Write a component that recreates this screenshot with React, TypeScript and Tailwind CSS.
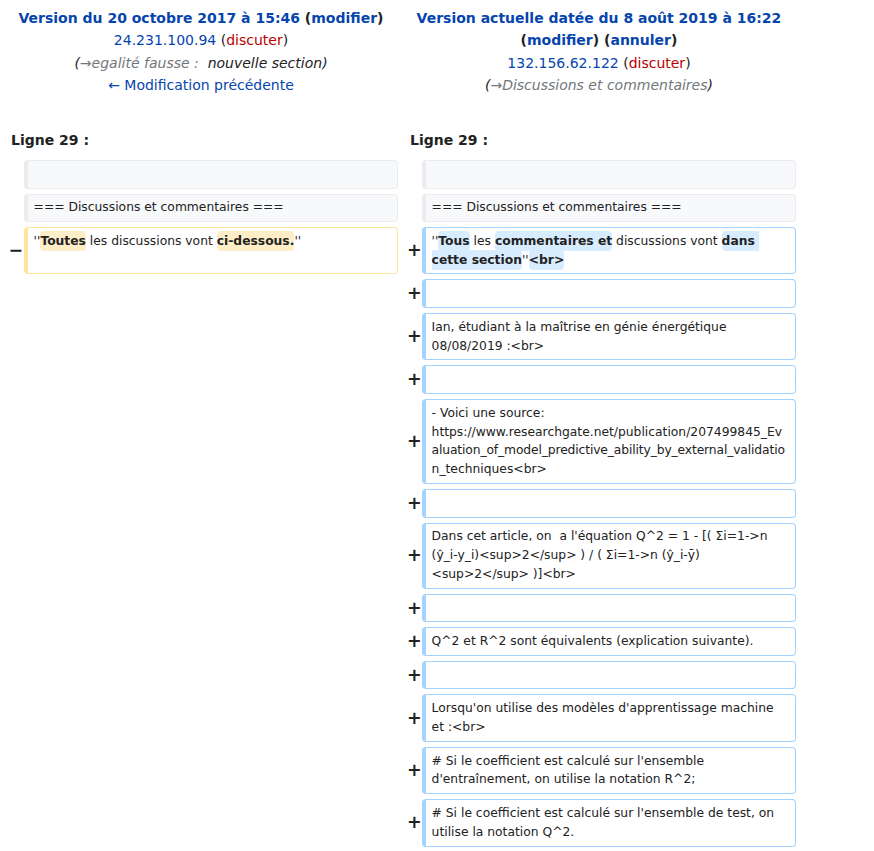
import React from "react";

const COLS = "grid grid-cols-[15.6px_374.4px_15.6px_374.4px] gap-x-[4px]";
const BOX =
  "rounded-[4px] border border-l-4 pl-[6px] pr-[3px] py-[3.8px] text-[12.32px] leading-[18.9px] whitespace-pre-wrap break-words";
const CTX = `${BOX} bg-[#f8f9fa] border-[#eaecf0]`;
const ADD = `${BOX} bg-white border-[#a3d3ff]`;
const DEL = `${BOX} bg-white border-[#ffe49c]`;

function Ins({ children }: { children: React.ReactNode }) {
  return <span className="font-bold bg-[#d8ecff] rounded-[4px] py-[0.25em]">{children}</span>;
}
function Del({ children }: { children: React.ReactNode }) {
  return <span className="font-bold bg-[#feeec8] rounded-[4px] py-[0.25em]">{children}</span>;
}

function Marker({ sign }: { sign?: string }) {
  return (
    <div className="flex items-center justify-end font-bold text-[17.5px] leading-[1.2] text-[#222]">
      {sign === "+" ? (
        <span className="translate-x-[4px] whitespace-nowrap">+</span>
      ) : sign ? (
        <span className="translate-x-[3.5px] whitespace-nowrap">{sign}</span>
      ) : null}
    </div>
  );
}

function AddedOnly({ children }: { children?: React.ReactNode }) {
  return (
    <>
      <div className="col-span-2" />
      <Marker sign="+" />
      <div className={ADD}>{children ?? "\u200b"}</div>
    </>
  );
}

const link = "text-[#0645ad]";
const red = "text-[#ba0000]";

export default function App() {
  return (
    <div className="w-[874px] min-h-[851px] bg-white text-[#222] text-[14px] font-['DejaVu_Sans','Liberation_Sans',sans-serif]">
      <div className="w-[800px] px-[4px] pt-[7px] pb-[10px]">
        {/* header */}
        <div className={COLS}>
          <div className="col-span-2 text-center leading-[22.4px]">
            <div>
              <strong>
                <span className={link}>Version du 20 octobre 2017 à 15:46</span> (
                <span className={link}>modifier</span>)
              </strong>
            </div>
            <div>
              <span className={link}>24.231.100.94</span> (<span className={red}>discuter</span>)
            </div>
            <div className="italic">
              <span>(</span>
              <span className="text-[#72777d]">→egalité fausse :</span>
              {"\u00a0 nouvelle section)"}
            </div>
            <div>
              <span className={link}>← Modification précédente</span>
            </div>
          </div>
          <div className="col-span-2 text-center leading-[22.4px]">
            <div>
              <strong>
                <span className={link}>Version actuelle datée du 8 août 2019 à 16:22</span> (
                <span className={link}>modifier</span>) (<span className={link}>annuler</span>)
              </strong>
            </div>
            <div>
              <span className={link}>132.156.62.122</span> (<span className={red}>discuter</span>)
            </div>
            <div className="italic">
              <span>(</span>
              <span className="text-[#72777d]">→Discussions et commentaires</span>
              <span>)</span>
            </div>
          </div>
        </div>

        {/* line numbers */}
        <div className={`${COLS} mt-[32px]`}>
          <div className="col-span-2 pl-[7px] font-bold leading-[22.4px]">Ligne 29 :</div>
          <div className="col-span-2 pl-[8px] font-bold leading-[22.4px]">Ligne 29 :</div>
        </div>

        {/* diff rows */}
        <div className={`${COLS} gap-y-[5px] mt-[9px]`}>
          <Marker />
          <div className={CTX}>{"\u200b"}</div>
          <Marker />
          <div className={CTX}>{"\u200b"}</div>

          <Marker />
          <div className={CTX}>=== Discussions et commentaires ===</div>
          <Marker />
          <div className={CTX}>=== Discussions et commentaires ===</div>

          <Marker sign="−" />
          <div className={DEL}>
            ''<Del>Toutes</Del> les discussions vont <Del>ci-dessous.</Del>''
          </div>
          <Marker sign="+" />
          <div className={ADD}>
            ''<Ins>Tous</Ins> les <Ins>commentaires et</Ins> discussions vont{" "}
            <Ins>dans cette section</Ins>''<Ins>&lt;br&gt;</Ins>
          </div>

          <AddedOnly />
          <AddedOnly>Ian, étudiant à la maîtrise en génie énergétique 08/08/2019 :&lt;br&gt;</AddedOnly>
          <AddedOnly />
          <AddedOnly>
            {"- Voici une source: https://www.researchgate.net/publication/207499845_Ev\n"}
            <span className="tracking-[-0.13px]">{"aluation_of_model_predictive_ability_by_external_validatio"}</span>
            {"\nn_techniques<br>"}
          </AddedOnly>
          <AddedOnly />
          <AddedOnly>
            {
              "Dans cet article, on  a l'équation Q^2 = 1 - [( Σi=1->n (ŷ_i-y_i)<sup>2</sup> ) / ( Σi=1->n (ŷ_i-ȳ) <sup>2</sup> )]<br>"
            }
          </AddedOnly>
          <AddedOnly />
          <AddedOnly>Q^2 et R^2 sont équivalents (explication suivante).</AddedOnly>
          <AddedOnly />
          <AddedOnly>{"Lorsqu'on utilise des modèles d'apprentissage machine\net :<br>"}</AddedOnly>
          <AddedOnly>
            {"# Si le coefficient est calculé sur l'ensemble d'entraînement, on utilise la notation R^2;"}
          </AddedOnly>
          <AddedOnly>
            {"# Si le coefficient est calculé sur l'ensemble de test, on utilise la notation Q^2."}
          </AddedOnly>
        </div>
      </div>
    </div>
  );
}
